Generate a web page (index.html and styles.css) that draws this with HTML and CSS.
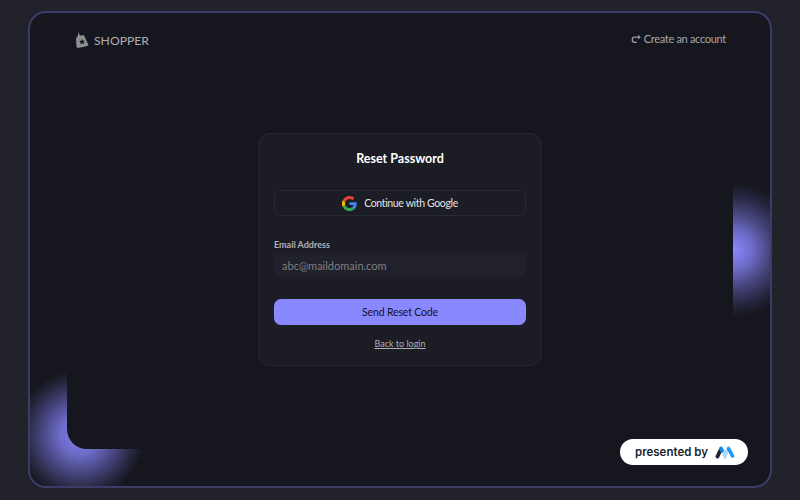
FILE: index.html
```html
<!DOCTYPE html>
<html lang="en">
<head>
    <meta charset="UTF-8">
    <meta name="viewport" content="width=device-width, initial-scale=1.0">
    <title>Reset Password</title>
<link rel="stylesheet" href="styles.css">
</head>
<body>
    <div class="frame">
        <div class="glow glow-left"></div>
        <div class="glow glow-right"></div>

        <div class="panel">
            <header class="topbar">
                <a class="brand" href="#">
                    <svg class="brand-icon" viewBox="0 0 16 18" width="16" height="18">
                        <path fill="#8f8f93" d="M3.200 1l1.800 3.500 4-.3 4.400 9.800-.9 1L3 17l-1.500-1L1 7.500l2-3z"/>
                        <path fill="#16161f" d="M7 7.800l.9 1.900 2.100.1-1.500 1.400.5 2.100-1.900-1-1.800 1.100.4-2.100-1.600-1.400 2.100-.2z"/>
                    </svg>
                    <span>SHOPPER</span>
                </a>
                <a class="create-link" href="#">
                    <svg viewBox="0 0 12 12" width="10" height="10">
                        <path fill="none" stroke="#9a9a9e" stroke-width="1.600" d="M10 3.800H4.500A3 3 0 0 0 1.500 6.800V7a3 3 0 0 0 3 3H7"/>
                        <path fill="#9a9a9e" d="M8.400 1l3.200 2.800-3.200 2.800z"/>
                    </svg>
                    <span>Create an account</span>
                </a>
            </header>

            <form class="card">
                <h1 class="card-title">Reset Password</h1>
                <button type="button" class="google-btn">
                    <svg viewBox="0 0 48 48" width="15" height="15">
                        <path fill="#EA4335" d="M24 9.500c3.500 0 6.700 1.200 9.200 3.600l6.900-6.900C35.900 2.400 30.500 0 24 0 14.600 0 6.500 5.400 2.600 13.200l8 6.200C12.400 13.700 17.700 9.500 24 9.500z"/>
                        <path fill="#4285F4" d="M47 24.500c0-1.600-.1-3.100-.4-4.500H24v9h12.900c-.6 3-2.200 5.500-4.700 7.200l7.700 6c4.500-4.200 7.100-10.300 7.100-17.700z"/>
                        <path fill="#FBBC05" d="M10.500 28.600c-.5-1.400-.8-3-.8-4.600s.3-3.200.8-4.600l-8-6.200C.9 16.500 0 20.100 0 24s.9 7.500 2.600 10.800l7.900-6.200z"/>
                        <path fill="#34A853" d="M24 48c6.500 0 11.900-2.100 15.900-5.800l-7.700-6c-2.200 1.500-4.900 2.300-8.200 2.300-6.300 0-11.600-4.200-13.500-9.900l-8 6.200C6.500 42.600 14.600 48 24 48z"/>
                    </svg>
                    <span>Continue with Google</span>
                </button>
                <label class="field-label" for="email">Email Address</label>
                <input class="field-input" id="email" type="text" placeholder="abc@maildomain.com">
                <button type="button" class="send-btn">Send Reset Code</button>
                <a class="back-link" href="#">Back to login</a>
            </form>
        </div>

        <div class="presented">
            <span>presented by</span>
            <svg viewBox="0 0 20 14" width="20" height="14">
                <path fill="none" stroke="#a6dcff" stroke-width="3.600" stroke-linecap="round" d="M7.500 5l2.500 6 2.500-6"/>
                <path fill="none" stroke="#1f2530" stroke-width="3.800" stroke-linecap="round" d="M2.500 11.500l3-6.500"/>
                <path fill="none" stroke="#1688e0" stroke-width="3.800" stroke-linecap="round" d="M6 3.500l1 2"/>
                <path fill="none" stroke="#1e9bf0" stroke-width="3.600" stroke-linecap="round" d="M13.500 3.500l4 7.500"/>
            </svg>
        </div>
    </div>
</body>
</html>
```

FILE: styles.css
```css
* {
    margin: 0;
    padding: 0;
    box-sizing: border-box;
}
body {
    height: 100vh;
    padding: 11px 28px 12px;
    background-color: #21222a;
    font-family: "Lato", "Open Sans", sans-serif;
    overflow: hidden;
}
a {
    text-decoration: none;
    color: inherit;
}
.frame {
    position: relative;
    height: 100%;
    padding: 0 37px 37px;
    background-color: #16161f;
    border: 2px solid #3e3b68;
    border-radius: 18px;
    overflow: hidden;
}
/* glows sit behind the panel, only the outer part shows */
.glow {
    position: absolute;
    border-radius: 50%;
}
.glow-left {
    left: -15px;
    bottom: -14px;
    width: 130px;
    height: 130px;
    background: radial-gradient(circle closest-side, #807ee8 0%, #6e6cc8 30%, #45447c 60%, #25253c 85%, rgba(22, 22, 31, 0) 100%);
}
.glow-right {
    right: -31px;
    top: 169px;
    width: 136px;
    height: 136px;
    background: radial-gradient(circle closest-side, #8a88ff 0%, #6e6cc8 28%, #444378 56%, #24243c 82%, rgba(22, 22, 31, 0) 100%);
}
.panel {
    position: relative;
    height: 100%;
    background-color: #16161f;
    border-radius: 0 0 0 20px;
}
.topbar {
    display: flex;
    align-items: center;
    justify-content: space-between;
    height: 54px;
    padding: 0 7px 0 8px;
}
.brand {
    display: flex;
    align-items: center;
    gap: 3px;
    font-size: 12.2px;
    color: #aeaeb2;
}
.create-link {
    display: flex;
    align-items: center;
    gap: 3px;
    padding-bottom: 3px;
    font-size: 11px;
    letter-spacing: -0.3px;
    color: #a8a8ac;
}
.card {
    display: flex;
    flex-direction: column;
    width: 284px;
    height: 233px;
    margin: 66px auto 0;
    padding: 15px;
    background-color: #1b1c24;
    border: 1px solid #272833;
    border-radius: 12px;
}
.card-title {
    font-size: 12.5px;
    line-height: 20px;
    font-weight: 700;
    text-align: center;
    color: #fff;
}
.google-btn {
    display: flex;
    align-items: center;
    justify-content: center;
    gap: 7px;
    height: 26px;
    margin-top: 21px;
    background: transparent;
    border: 1px solid #292a35;
    border-radius: 7px;
    font-family: inherit;
    font-size: 10.5px;
    letter-spacing: -0.35px;
    color: #e4e4e6;
}
.field-label {
    margin-top: 23px;
    font-size: 9px;
    line-height: 12px;
    font-weight: 700;
    color: #b2b2b8;
}
.field-input {
    height: 24px;
    margin-top: 2px;
    padding: 0 8px;
    background-color: #20212a;
    border: none;
    outline: none;
    border-radius: 6px;
    font-family: inherit;
    font-size: 11px;
    color: #fff;
}
.field-input::placeholder {
    color: #7f7f85;
    opacity: 1;
}
.send-btn {
    height: 26px;
    margin-top: 22px;
    background-color: #8a88ff;
    border: none;
    border-radius: 7px;
    font-family: inherit;
    font-size: 10.5px;
    letter-spacing: -0.15px;
    color: #12121a;
}
.back-link {
    margin-top: 13px;
    font-size: 9px;
    line-height: 12px;
    text-align: center;
    text-decoration: underline;
    color: #b0b0b8;
}
.presented {
    position: absolute;
    right: 22px;
    bottom: 21px;
    display: flex;
    align-items: center;
    gap: 7px;
    height: 26px;
    padding: 0 13px 0 15px;
    background-color: #fff;
    border-radius: 13px;
    font-family: "Inter", sans-serif;
    font-size: 11.5px;
    font-weight: 600;
    color: #1b1f2e;
}
```
